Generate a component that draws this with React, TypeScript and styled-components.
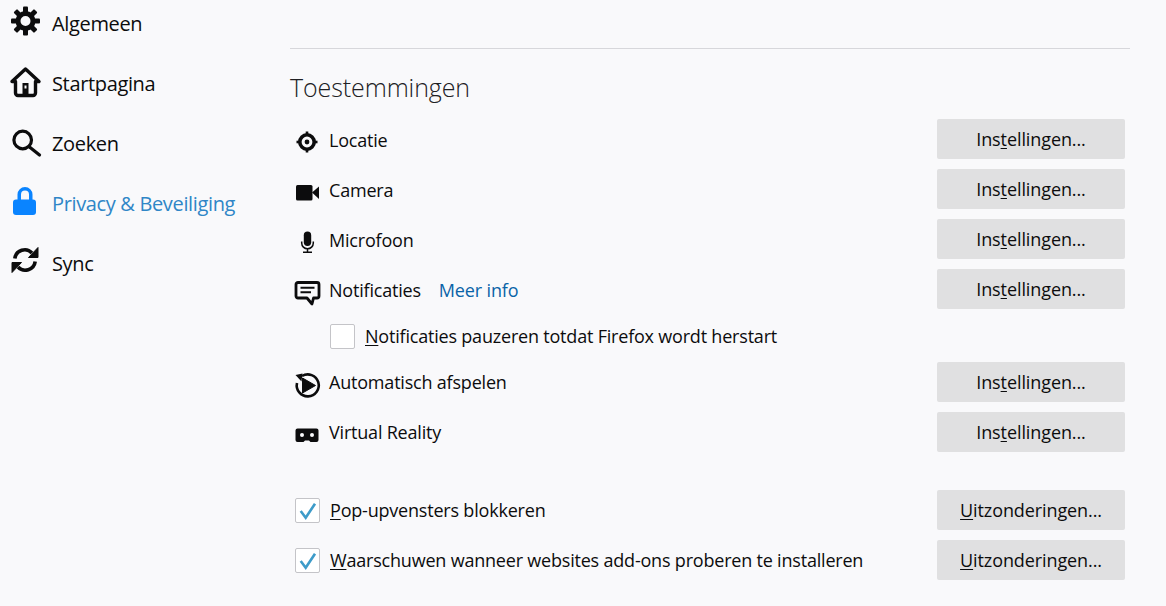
import styled, { createGlobalStyle } from "styled-components"

const GlobalStyle = createGlobalStyle`
  html, body {
    margin: 0;
    height: 100%;
    overflow: hidden;
    background: #f9f9fb;
  }
  body {
    font-family: "Open Sans", "Noto Sans", sans-serif;
    color: #0c0c0d;
  }
`

const Page = styled.div`
  display: flex;
  width: 1166px;
  height: 606px;
  overflow: hidden;
`

const Sidebar = styled.nav`
  width: 290px;
  flex: none;
  margin-top: -6px;
  padding-left: 10px;
  box-sizing: border-box;
`

const NavItem = styled.div<{ $active?: boolean }>`
  display: flex;
  align-items: center;
  height: 60px;
  gap: 12px;
  font-size: 20px;
  letter-spacing: -0.35px;
  color: ${(p) => (p.$active ? "#2f86c7" : "#0c0c0d")};
`

const NavLabel = styled.span`
  margin-top: -2px;
`

const NavIcon = styled.svg`
  width: 30px;
  height: 30px;
  flex: none;
  margin-top: -4px;
  overflow: visible;
`

const Main = styled.main`
  width: 840px;
  flex: none;
`

const Divider = styled.div`
  height: 1px;
  margin-top: 48px;
  background: #d7d7db;
`

const Heading = styled.h1`
  margin: 21px 0 14px;
  height: 35px;
  line-height: 35px;
  font-size: 25px;
  font-weight: 300;
  letter-spacing: -0.1px;
  color: #202023;
`

const Row = styled.div<{ $spaced?: boolean }>`
  display: flex;
  align-items: center;
  height: 40px;
  margin: ${(p) => (p.$spaced ? "38px" : "0")} 5px 10px 0;
`

const PermIcon = styled.svg`
  width: 24px;
  height: 24px;
  flex: none;
  margin: 5px 10px 0 5px;
  overflow: visible;
`

const RowLabel = styled.span<{ $raised?: boolean }>`
  font-size: 18px;
  letter-spacing: -0.2px;
  margin-top: ${(p) => (p.$raised ? "0" : "2px")};
`

const LearnMore = styled.a`
  margin: 2px 0 0 18px;
  font-size: 18px;
  letter-spacing: -0.15px;
  color: #0a64a8;
`

const Spacer = styled.div`
  flex: 1;
`

const Button = styled.button`
  width: 188px;
  height: 40px;
  padding: 0;
  border: 0;
  border-radius: 2px;
  background: #e0e0e1;
  color: #0c0c0d;
  font-family: inherit;
  font-size: 18px;
  letter-spacing: -0.1px;
`

const Key = styled.span`
  text-decoration: underline;
  text-underline-offset: 2px;
  text-decoration-thickness: 1px;
`

const SubRow = styled.div`
  display: flex;
  align-items: center;
  height: 24px;
  margin: 15px 0 14px 40px;
`

const CheckBox = styled.span`
  display: flex;
  align-items: center;
  justify-content: center;
  box-sizing: border-box;
  width: 25px;
  height: 25px;
  flex: none;
  margin-right: 10px;
  border: 1px solid #c4c4c8;
  border-radius: 2px;
  background: #fff;
`

const CheckLead = styled(CheckBox)`
  margin-left: 5px;
`

const Tick = styled.svg`
  width: 23px;
  height: 23px;
`

const CheckMark = () => (
  <Tick viewBox="0 0 23 23" fill="none" stroke="#3d9bc9" strokeWidth="2.6">
    <path d="M4.7 12 L9.7 18.7 L19 4.7" />
  </Tick>
)

const gearTeeth = [0, 45, 90, 135, 180, 225, 270, 315]

const icons = {
  gear: (
    <g fill="#0c0c0d">
      <circle cx="15.5" cy="14" r="7.5" fill="none" stroke="#0c0c0d" strokeWidth="5" />
      {gearTeeth.map((a) => (
        <rect key={a} x="13" y="-0.5" width="5" height="7" rx="1" transform={`rotate(${a} 15.5 14)`} />
      ))}
    </g>
  ),
  home: (
    <g fill="none" stroke="#0c0c0d" strokeWidth="3.4" strokeLinejoin="round" strokeLinecap="round">
      <path d="M2 14.5 L15.5 2 L29 14.5 H25.5 V26 a2.5 2.5 0 0 1-2.5 2.5 H8 a2.5 2.5 0 0 1-2.5-2.5 V14.5 Z" />
      <rect x="12.5" y="16" width="6" height="12" fill="#0c0c0d" stroke="none" />
      <rect x="14.5" y="18.5" width="2" height="3" fill="#f9f9fb" stroke="none" />
    </g>
  ),
  search: (
    <g fill="none" stroke="#0c0c0d" strokeWidth="3.2" strokeLinecap="round">
      <circle cx="12.7" cy="13" r="8.8" />
      <path d="M19.5 20 L29.5 28" />
    </g>
  ),
  lock: (
    <g>
      <path d="M9.25 14 V7.5 a5.75 5.75 0 0 1 11.5 0 V14" fill="none" stroke="#0a84ff" strokeWidth="3.5" />
      <rect x="3" y="12.5" width="23" height="15.5" rx="3" fill="#0a84ff" />
    </g>
  ),
  sync: (
    <g>
      <path d="M4.8 11.5 A10 10 0 0 1 22 6" fill="none" stroke="#0c0c0d" strokeWidth="3.6" />
      <path d="M28 0.5 V10.5 H18.5 Z" fill="#0c0c0d" stroke="#0c0c0d" strokeLinejoin="round" />
      <path d="M25.2 14.5 A10 10 0 0 1 8 20" fill="none" stroke="#0c0c0d" strokeWidth="3.6" />
      <path d="M2 25.5 V15.5 H11.5 Z" fill="#0c0c0d" stroke="#0c0c0d" strokeLinejoin="round" />
    </g>
  ),
}

const permIcons = {
  location: (
    <g fill="#0c0c0d">
      <circle cx="12" cy="12" r="7.2" fill="none" stroke="#0c0c0d" strokeWidth="3.6" />
      <circle cx="12" cy="12" r="2.4" />
      <rect x="10.7" y="1.5" width="2.6" height="3" />
      <rect x="10.7" y="19.5" width="2.6" height="3" />
      <rect x="1.5" y="10.7" width="3" height="2.6" />
      <rect x="19.5" y="10.7" width="3" height="2.6" />
    </g>
  ),
  camera: (
    <g fill="#0c0c0d">
      <rect x="1" y="5" width="16.5" height="15.5" rx="1.5" />
      <path d="M17 12.5 L24 6.5 V19 Z" />
    </g>
  ),
  mic: (
    <g>
      <rect x="8.8" y="1.5" width="7.4" height="14.5" rx="3.7" fill="#0c0c0d" />
      <path d="M6.7 11.5 V13 a5.8 5.8 0 0 0 11.6 0 V11.5 M12.5 19 V22 M8 22.2 H17" fill="none" stroke="#0c0c0d" strokeWidth="1.5" />
    </g>
  ),
  bubble: (
    <g>
      <path
        d="M3 2.5 H22 A2 2 0 0 1 24 4.5 V16 A2 2 0 0 1 22 18 H18.5 L17 24 L12 18 H3 A2 2 0 0 1 1 16 V4.5 A2 2 0 0 1 3 2.5 Z"
        fill="none"
        stroke="#0c0c0d"
        strokeWidth="2.8"
        strokeLinejoin="round"
      />
      <path d="M5.5 7.8 H19.5 M5.5 12.2 H16" stroke="#0c0c0d" strokeWidth="2" />
    </g>
  ),
  autoplay: (
    <g>
      <path d="M7 3 A11 11 0 1 1 2 10" fill="none" stroke="#0c0c0d" strokeWidth="2.6" />
      <path d="M0.5 2 L7.5 0.5 L6.5 8.5 Z" fill="#0c0c0d" />
      <path d="M7.5 5 L20.5 12.5 L7.5 20 Z" fill="#0c0c0d" stroke="#0c0c0d" strokeLinejoin="round" />
    </g>
  ),
  vr: (
    <g>
      <path
        fill="#0c0c0d"
        d="M2.5 5.5 H21.5 A2 2 0 0 1 23.5 7.5 V17 A2 2 0 0 1 21.5 19 H15.5 L14 17.5 H10 L8.5 19 H2.5 A2 2 0 0 1 .5 17 V7.5 A2 2 0 0 1 2.5 5.5 Z"
      />
      <circle cx="7" cy="12" r="2" fill="#f9f9fb" />
      <circle cx="17" cy="12" r="2" fill="#f9f9fb" />
    </g>
  ),
}

const navItems = [
  { label: "Algemeen", icon: icons.gear },
  { label: "Startpagina", icon: icons.home },
  { label: "Zoeken", icon: icons.search },
  { label: "Privacy & Beveiliging", icon: icons.lock, active: true },
  { label: "Sync", icon: icons.sync },
]

function SettingsButton() {
  return (
    <Button>
      Ins<Key>t</Key>ellingen...
    </Button>
  )
}

function ExceptionsButton() {
  return (
    <Button>
      <Key>U</Key>itzonderingen...
    </Button>
  )
}

function App() {
  return (
    <Page>
      <GlobalStyle />
      <Sidebar>
        {navItems.map((item) => (
          <NavItem key={item.label} $active={item.active}>
            <NavIcon viewBox="0 0 30 30">{item.icon}</NavIcon>
            <NavLabel>{item.label}</NavLabel>
          </NavItem>
        ))}
      </Sidebar>
      <Main>
        <Divider />
        <Heading>Toestemmingen</Heading>
        <Row>
          <PermIcon viewBox="0 0 24 24">{permIcons.location}</PermIcon>
          <RowLabel>Locatie</RowLabel>
          <Spacer />
          <SettingsButton />
        </Row>
        <Row>
          <PermIcon viewBox="0 0 24 24">{permIcons.camera}</PermIcon>
          <RowLabel>Camera</RowLabel>
          <Spacer />
          <SettingsButton />
        </Row>
        <Row>
          <PermIcon viewBox="0 0 24 24">{permIcons.mic}</PermIcon>
          <RowLabel>Microfoon</RowLabel>
          <Spacer />
          <SettingsButton />
        </Row>
        <Row>
          <PermIcon viewBox="0 0 24 24">{permIcons.bubble}</PermIcon>
          <RowLabel>Notificaties</RowLabel>
          <LearnMore>Meer info</LearnMore>
          <Spacer />
          <SettingsButton />
        </Row>
        <SubRow>
          <CheckBox />
          <RowLabel $raised>
            <Key>N</Key>otificaties pauzeren totdat Firefox wordt herstart
          </RowLabel>
        </SubRow>
        <Row>
          <PermIcon viewBox="0 0 24 24">{permIcons.autoplay}</PermIcon>
          <RowLabel $raised>Automatisch afspelen</RowLabel>
          <Spacer />
          <SettingsButton />
        </Row>
        <Row>
          <PermIcon viewBox="0 0 24 24">{permIcons.vr}</PermIcon>
          <RowLabel $raised>Virtual Reality</RowLabel>
          <Spacer />
          <SettingsButton />
        </Row>
        <Row $spaced>
          <CheckLead>
            <CheckMark />
          </CheckLead>
          <RowLabel $raised>
            <Key>P</Key>op-upvensters blokkeren
          </RowLabel>
          <Spacer />
          <ExceptionsButton />
        </Row>
        <Row>
          <CheckLead>
            <CheckMark />
          </CheckLead>
          <RowLabel $raised>
            <Key>W</Key>aarschuwen wanneer websites add-ons proberen te installeren
          </RowLabel>
          <Spacer />
          <ExceptionsButton />
        </Row>
      </Main>
    </Page>
  )
}

export default App
